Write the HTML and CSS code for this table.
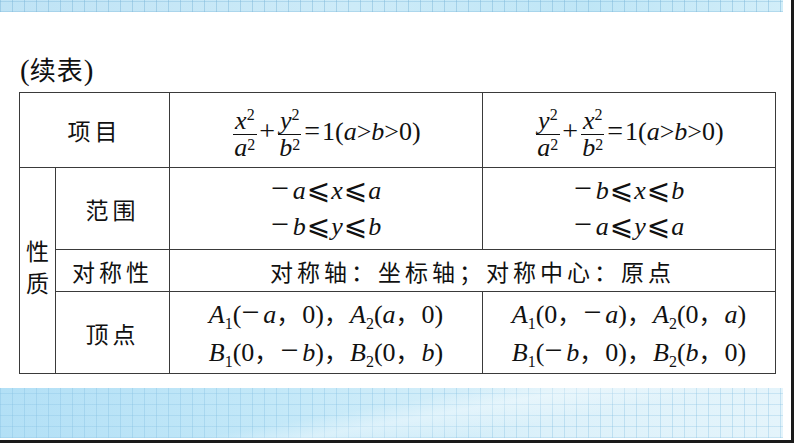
FILE: index.html
```html
<!DOCTYPE html>
<html lang="zh">
<head>
<meta charset="utf-8">
<link rel="stylesheet" href="styles.css">
</head>
<body>
<div class="page">
  <div class="band-top"></div>
  <div class="content">
    <div class="caption"><span class="paren">(</span>续表<span class="paren">)</span></div>
    <table class="tbl">
      <colgroup>
        <col class="c1"><col class="c2"><col class="c3"><col class="c4">
      </colgroup>
      <tr class="r-head">
        <td colspan="2" class="zh">项目</td>
        <td class="m head">
          <span class="frac"><span class="num"><i>x</i><sup>2</sup></span><span class="den"><i>a</i><sup>2</sup></span></span><span class="op">+</span><span class="frac"><span class="num"><i>y</i><sup>2</sup></span><span class="den"><i>b</i><sup>2</sup></span></span><span class="op eq">=</span>1(<i>a</i>&gt;<i>b</i>&gt;0)
        </td>
        <td class="m head">
          <span class="frac"><span class="num"><i>y</i><sup>2</sup></span><span class="den"><i>a</i><sup>2</sup></span></span><span class="op">+</span><span class="frac"><span class="num"><i>x</i><sup>2</sup></span><span class="den"><i>b</i><sup>2</sup></span></span><span class="op eq">=</span>1(<i>a</i>&gt;<i>b</i>&gt;0)
        </td>
      </tr>
      <tr class="r-range">
        <td rowspan="3" class="zh side">性<br>质</td>
        <td class="zh">范围</td>
        <td class="m lines"><div><span class="minus">−</span><i>a</i><span class="le">⩽</span><i>x</i><span class="le">⩽</span><i>a</i></div><div><span class="minus">−</span><i>b</i><span class="le">⩽</span><i>y</i><span class="le">⩽</span><i>b</i></div></td>
        <td class="m lines"><div><span class="minus">−</span><i>b</i><span class="le">⩽</span><i>x</i><span class="le">⩽</span><i>b</i></div><div><span class="minus">−</span><i>a</i><span class="le">⩽</span><i>y</i><span class="le">⩽</span><i>a</i></div></td>
      </tr>
      <tr class="r-sym">
        <td class="zh">对称性</td>
        <td colspan="2" class="zh">对称轴：坐标轴；对称中心：原点</td>
      </tr>
      <tr class="r-vert">
        <td class="zh">顶点</td>
        <td class="m lines"><div><i>A</i><sub>1</sub>(<span class="minus">−</span><i>a</i><span class="cm">，</span>0)<span class="cm">，</span><i>A</i><sub>2</sub>(<i>a</i><span class="cm">，</span>0)</div><div><i>B</i><sub>1</sub>(0<span class="cm">，</span><span class="minus">−</span><i>b</i>)<span class="cm">，</span><i>B</i><sub>2</sub>(0<span class="cm">，</span><i>b</i>)</div></td>
        <td class="m lines"><div><i>A</i><sub>1</sub>(0<span class="cm">，</span><span class="minus">−</span><i>a</i>)<span class="cm">，</span><i>A</i><sub>2</sub>(0<span class="cm">，</span><i>a</i>)</div><div><i>B</i><sub>1</sub>(<span class="minus">−</span><i>b</i><span class="cm">，</span>0)<span class="cm">，</span><i>B</i><sub>2</sub>(<i>b</i><span class="cm">，</span>0)</div></td>
      </tr>
    </table>
  </div>
  <div class="band-bottom"></div>
</div>
</body>
</html>
```

FILE: styles.css
```css
html, body {
  margin: 0;
  padding: 0;
  background: #ffffff;
}
.page {
  width: 794px;
  height: 443px;
  overflow: hidden;
  display: flex;
  flex-direction: column;
  box-sizing: border-box;
  border-right: 3px solid #1a1a1a;
  border-bottom: 3px solid #1a1a1a;
}
.band-top {
  height: 12px;
  flex: none;
  margin-right: 8px;
  background:
    repeating-linear-gradient(90deg, rgba(120,180,215,0.45) 0 1px, transparent 1px 12px),
    repeating-linear-gradient(0deg, rgba(120,180,215,0.35) 0 1px, transparent 1px 10px),
    linear-gradient(90deg, #bfe3f5 0%, #cdebf8 45%, #bfe6f6 75%, #d2eef9 100%);
}
.content {
  flex: 1;
  padding: 0 17px 0 19px;
}
.caption {
  margin-top: 41px;
  height: 39px;
  line-height: 32px;
  font-family: "Noto Sans CJK SC", sans-serif;
  font-size: 26px;
  color: #111;
  padding-left: 1px;
  letter-spacing: 1px;
}
.caption .paren {
  font-family: "Liberation Serif", serif;
  font-size: 29px;
  letter-spacing: 0;
}
.tbl {
  border-collapse: collapse;
  table-layout: fixed;
  width: 756px;
  color: #111;
}
.c1 { width: 36px; }
.c2 { width: 114px; }
.c3 { width: 313px; }
.c4 { width: 293px; }
.tbl td {
  border: 1px solid #3a3a3a;
  padding: 0;
  text-align: center;
  vertical-align: middle;
}
.zh {
  font-family: "Noto Sans CJK SC", sans-serif;
  font-size: 23px;
  letter-spacing: 4px;
  font-weight: 400;
}
.zh.side {
  line-height: 32px;
  letter-spacing: 0;
  padding-bottom: 10px;
}
.r-head { height: 75px; }
.r-range { height: 82px; }
.r-sym { height: 42px; }
.r-vert { height: 82px; }
.m {
  font-family: "Liberation Serif", "Times New Roman", serif;
  font-size: 26px;
  white-space: nowrap;
}
.m.head { padding-top: 8px; }
.m i {
  font-family: "Liberation Serif", serif;
  font-style: italic;
}
.lines {
  line-height: 36px;
  padding-top: 4px;
}
.frac {
  display: inline-flex;
  flex-direction: column;
  align-items: center;
  vertical-align: middle;
  line-height: 26px;
  margin: 0 1px;
}
.frac .num {
  border-bottom: 1px solid #111;
  padding: 0 2px;
}
.frac .den { padding: 0 2px; }
.frac sup {
  font-size: 16px;
  vertical-align: 9px;
  line-height: 0;
}
.frac .den sup { vertical-align: 6px; }
.op {
  font-size: 28px;
  padding: 0 1px;
}
.op.eq { padding: 0 2px 0 1px; }
sub {
  font-size: 16px;
  vertical-align: -6px;
  line-height: 0;
}
.minus {
  font-size: 32px;
  line-height: 0;
  padding: 0 4px 0 0;
}
.le {
  font-family: "DejaVu Serif", "DejaVu Sans", serif;
  font-size: 28px;
  line-height: 0;
  padding: 0 1px;
}
.cm {
  font-family: "Noto Sans CJK SC", sans-serif;
  font-size: 24px;
  padding-right: 2px;
}
.band-bottom {
  flex: none;
  height: 50px;
  margin-bottom: 2px;
  margin-right: 8px;
  background:
    linear-gradient(170deg, transparent 0 45%, rgba(255,255,255,0.35) 55%, transparent 70%),
    repeating-linear-gradient(90deg, rgba(130,190,225,0.35) 0 1px, transparent 1px 12px),
    repeating-linear-gradient(0deg, rgba(130,190,225,0.3) 0 1px, transparent 1px 11px),
    linear-gradient(90deg, #b3e0f6 0%, #c3e8f8 35%, #dcf1fa 70%, #e4f4fb 100%);
}
```
